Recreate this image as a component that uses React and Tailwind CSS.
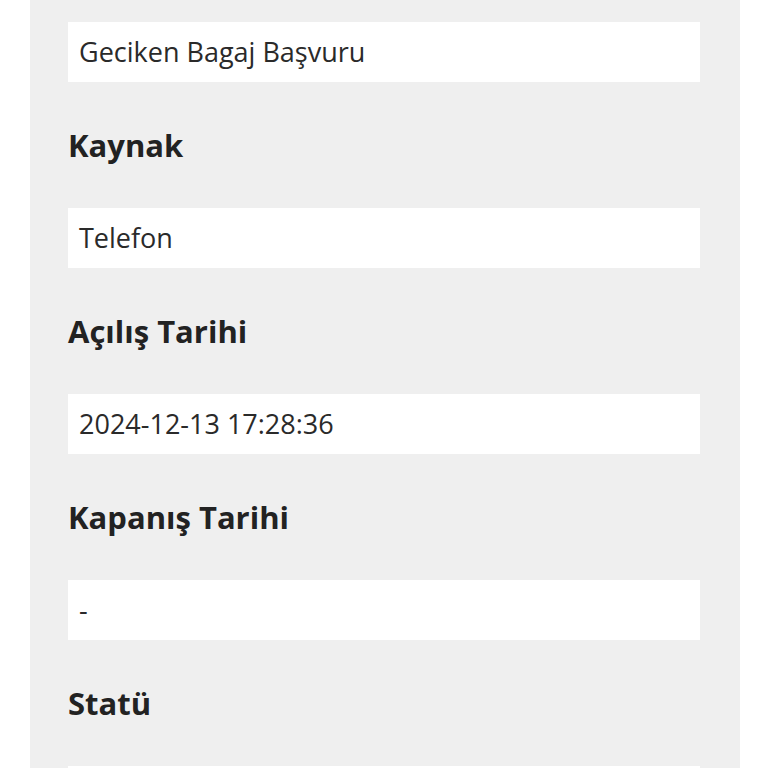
import React from 'react';

const fields = [
  { label: null, value: 'Geciken Bagaj Başvuru' },
  { label: 'Kaynak', value: 'Telefon' },
  { label: 'Açılış Tarihi', value: '2024-12-13 17:28:36' },
  { label: 'Kapanış Tarihi', value: '-' },
  { label: 'Statü', value: '' },
];

const App = () => {
  return (
    <div className="min-h-screen bg-white overflow-hidden" style={{ fontFamily: '"Open Sans", "Noto Sans", sans-serif' }}>
      <div className="ml-[30px] w-[710px] h-[768px] bg-[#efefef] pl-[38px] pr-[40px] pt-[22px]">
        {fields.map((f, i) => (
          <div key={i}>
            {f.label && (
              <div className="pt-[42px] pb-[42px] h-[126px] flex items-center text-[31px] font-bold text-[#222] leading-[42px]">
                {f.label}
              </div>
            )}
            <div className="h-[60px] bg-white px-[11px] flex items-center text-[27px] text-[#2a2a2a]">
              {f.value}
            </div>
          </div>
        ))}
      </div>
    </div>
  );
};

export default App;
